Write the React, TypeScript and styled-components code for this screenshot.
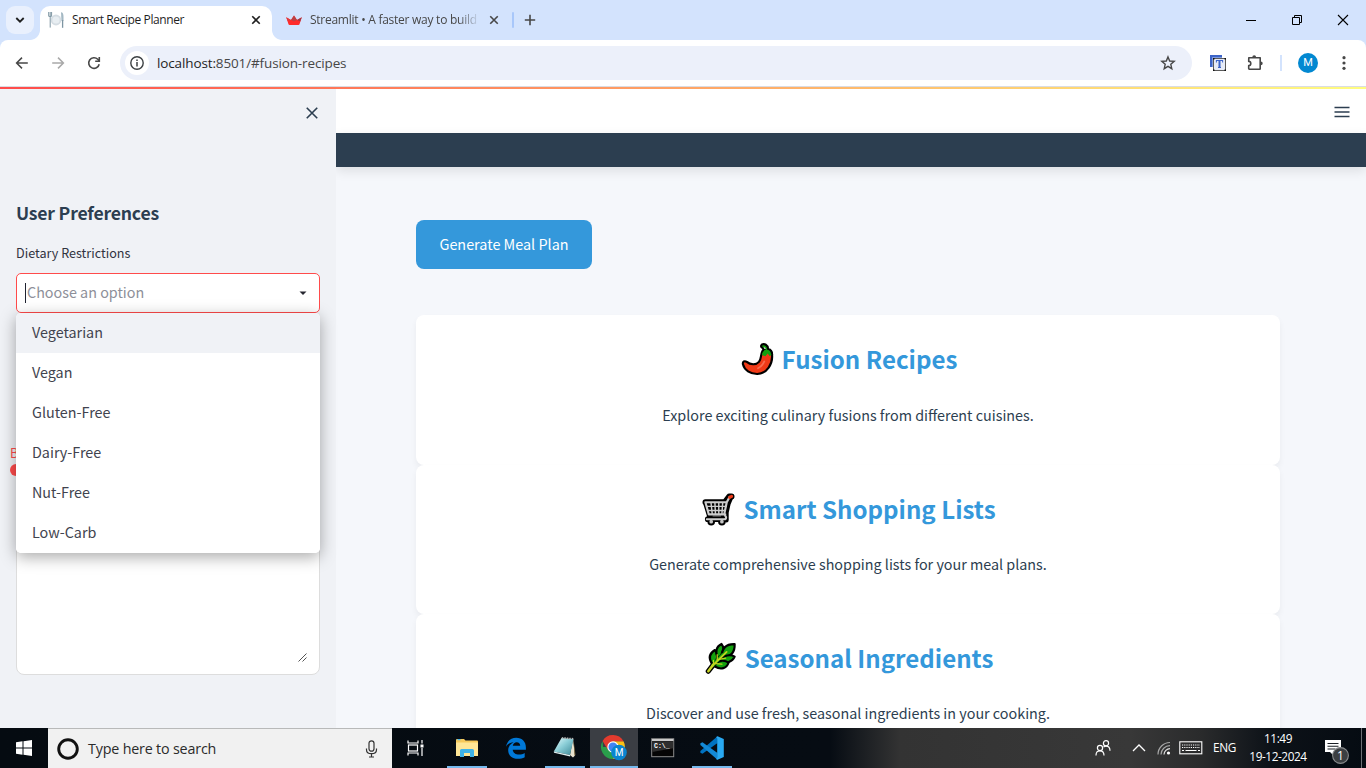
import React from 'react';
import styled, { createGlobalStyle } from 'styled-components';

const SEGOE = `"Open Sans", "Noto Sans", sans-serif`;
const SOURCE = `"Noto Sans CJK SC", "Noto Sans", sans-serif`;

const GlobalStyle = createGlobalStyle`
  * { box-sizing: border-box; }
  body { margin: 0; overflow: hidden; background: #fff; }
  svg { display: block; flex: none; }
`;

const Screen = styled.div`
  width: 1366px;
  height: 768px;
  display: flex;
  flex-direction: column;
  overflow: hidden;
  font-family: ${SEGOE};
`;

/* ---------- browser chrome ---------- */

const TabStrip = styled.div`
  height: 40px;
  flex: none;
  display: flex;
  background: #d3e3fd;
`;

const TabSearch = styled.div`
  width: 28px;
  height: 28px;
  margin: 6px 6px 0;
  border-radius: 9px;
  background: #e9f0fd;
  display: flex;
  align-items: center;
  justify-content: center;
`;

const Tab = styled.div<{ $active?: boolean }>`
  position: relative;
  width: ${p => (p.$active ? 232 : 238)}px;
  height: ${p => (p.$active ? 34 : 28)}px;
  margin-top: 6px;
  padding: 0 10px 0 ${p => (p.$active ? 8 : 14)}px;
  padding-bottom: ${p => (p.$active ? 6 : 0)}px;
  border-radius: 10px 10px 0 0;
  background: ${p => (p.$active ? '#fff' : 'transparent')};
  display: flex;
  align-items: center;
  ${p =>
    p.$active &&
    `&::before, &::after {
      content: '';
      position: absolute;
      bottom: 0;
      width: 10px;
      height: 10px;
    }
    &::before { left: -10px; background: radial-gradient(circle at 0 0, transparent 9.5px, #fff 10.3px); }
    &::after { right: -10px; background: radial-gradient(circle at 100% 0, transparent 9.5px, #fff 10.3px); }`}
`;

const TabTitle = styled.span<{ $fade?: boolean }>`
  flex: 1;
  margin-left: 8px;
  overflow: hidden;
  white-space: nowrap;
  font-size: 12px;
  line-height: 16px;
  letter-spacing: ${p => (p.$fade ? '-0.26px' : '-0.4px')};
  color: ${p => (p.$fade ? '#474747' : '#1f1f1f')};
  ${p => p.$fade && `max-width: 167px; mask-image: linear-gradient(to right, #000 148px, transparent 170px);`}
`;

const TabClose = styled.div`
  margin-left: auto;
`;

const StripDivider = styled.div`
  width: 2px;
  height: 16px;
  margin: 12px 10px 0 2px;
  border-radius: 1px;
  background: #a8c7fa;
`;

const NewTab = styled.div`
  height: 40px;
  display: flex;
  align-items: center;
`;

const WindowControls = styled.div`
  display: flex;
  margin-left: auto;
`;

const WindowButton = styled.div`
  width: 46px;
  height: 40px;
  display: flex;
  align-items: center;
  justify-content: center;
`;

const ToolbarBack = styled.div`
  flex: none;
  background: #d3e3fd;
`;

const Toolbar = styled.div`
  height: 47px;
  padding: 6px 14px 6px 14px;
  border-bottom: 1px solid #dadce3;
  border-radius: 8px 8px 0 0;
  background: #fff;
  display: flex;
  align-items: center;
`;

const NavIcons = styled.div`
  display: flex;
  gap: 20px;
  width: 106px;
`;

const Omnibox = styled.div`
  width: 1072px;
  height: 34px;
  padding: 0 16px 0 5px;
  border-radius: 17px;
  background: #ecf0fa;
  display: flex;
  align-items: center;
`;

const SiteInfo = styled.div`
  width: 24px;
  height: 24px;
  border-radius: 12px;
  background: #fff;
  display: flex;
  align-items: center;
  justify-content: center;
`;

const Address = styled.span`
  flex: 1;
  margin-left: 8px;
  font-size: 13.5px;
  letter-spacing: -0.13px;
  line-height: 20px;
  color: #474747;
  b { font-weight: 400; color: #1f1f1f; }
`;

const Extensions = styled.div`
  display: flex;
  align-items: center;
  margin-left: 18px;
`;

const ExtensionMenu = styled.div`
  margin-left: 20px;
`;

const ExtDivider = styled.div`
  width: 2px;
  height: 16px;
  margin: 0 16px;
  background: #d3e3fd;
`;

const Avatar = styled.div`
  width: 20px;
  height: 20px;
  margin-right: 18px;
  border-radius: 50%;
  background: #0288d1;
  color: #fff;
  font: 400 11px/20px Roboto, sans-serif;
  text-align: center;
`;

/* ---------- page ---------- */

const Decoration = styled.div`
  height: 2px;
  flex: none;
  background: linear-gradient(90deg, #ff4b4b, #fffd80);
`;

const Page = styled.div`
  flex: 1;
  min-height: 0;
  display: flex;
  overflow: hidden;
  font-family: ${SOURCE};
`;

const Sidebar = styled.aside`
  position: relative;
  z-index: 2;
  width: 336px;
  flex: none;
  padding: 16px;
  background: #f0f2f6;
  display: flex;
  flex-direction: column;
`;

const SidebarClose = styled.div`
  display: flex;
  justify-content: flex-end;
  height: 16px;
`;

const SidebarTitle = styled.h2`
  margin: 78px 0 0;
  height: 28px;
  font-size: 17.6px;
  line-height: 28px;
  font-weight: 600;
  letter-spacing: -0.2px;
  color: #2c3e50;
`;

const FieldLabel = styled.label`
  margin-top: 16px;
  font-size: 12.6px;
  line-height: 20px;
  color: #31333f;
`;

const Select = styled.div`
  position: relative;
  height: 40px;
  margin-top: 10px;
  padding: 0 11px 0 8px;
  border: 1px solid #ff4b4b;
  border-radius: 5px;
  background: #fff;
  display: flex;
  align-items: center;
`;

const Caret = styled.span`
  width: 1px;
  height: 20px;
  margin-right: 1px;
  background: #1f2330;
`;

const Placeholder = styled.span`
  flex: 1;
  padding-bottom: 2px;
  font-size: 14.35px;
  line-height: 24px;
  color: #8d8f99;
`;

const Menu = styled.ul`
  position: absolute;
  z-index: 3;
  left: -1px;
  top: 39px;
  width: 304px;
  margin: 0;
  padding: 0;
  list-style: none;
  border-radius: 5px;
  overflow: hidden;
  background: #fff;
  box-shadow: 0 4px 16px rgba(0, 0, 0, 0.34);
`;

const Option = styled.li<{ $hover?: boolean }>`
  height: 40px;
  padding: 0 16px;
  font-size: 14.35px;
  line-height: 38px;
  color: #41434e;
  background: ${p => (p.$hover ? '#f0f2f6' : '#fff')};
`;

const Slider = styled.div`
  margin: 132px -6px 0;
  height: 32px;
  font-size: 12.6px;
  line-height: 16px;
  color: #ff4b4b;
`;

const Thumb = styled.div`
  width: 12px;
  height: 12px;
  margin-top: 3px;
  border-radius: 6px;
  background: #ff4b4b;
`;

const TextArea = styled.div`
  height: 156px;
  margin-top: 42px;
  padding: 11px;
  border: 1px solid #dddddd;
  border-radius: 8px;
  background: #fff;
  display: flex;
  align-items: flex-end;
  justify-content: flex-end;
`;

const Main = styled.main`
  flex: 1;
  display: flex;
  flex-direction: column;
  background: #f5f7fb;
  color: #2c3e50;
`;

const Header = styled.div`
  height: 44px;
  flex: none;
  padding: 2px 16px 0 0;
  background: #fff;
  display: flex;
  align-items: center;
  justify-content: flex-end;
`;

const Banner = styled.div`
  height: 34px;
  flex: none;
  background: #2c3e50;
  box-shadow: 0 4px 12px rgba(0, 0, 0, 0.1);
`;

const Content = styled.div`
  flex: 1;
  min-height: 0;
  padding: 53px 86px 0 80px;
`;

const Primary = styled.button`
  display: block;
  width: 176px;
  height: 49px;
  margin-bottom: 46.4px;
  padding: 0 0 1px;
  border: 0;
  border-radius: 8px;
  background: #3498db;
  color: #fff;
  font: 400 14.4px/24px ${SOURCE};
`;

const Card = styled.section`
  height: 149.2px;
  border-radius: 8px;
  background: #fff;
  box-shadow: 0 4px 6px rgba(0, 0, 0, 0.05);
`;

const CardTitle = styled.h3`
  display: flex;
  justify-content: center;
  align-items: center;
  gap: 8px;
  height: 64px;
  margin: 0;
  padding: 24px 0 0 2px;
  font-size: 24.1px;
  line-height: 36px;
  font-weight: 600;
  color: #3498db;
  svg { margin-top: 1px; }
`;

const CardText = styled.p`
  margin: 23.4px 0 0;
  text-align: center;
  font-size: 14.35px;
  line-height: 24px;
`;

/* ---------- taskbar ---------- */

const Taskbar = styled.footer`
  position: relative;
  z-index: 5;
  height: 40px;
  flex: none;
  display: flex;
  background: linear-gradient(90deg, #050b11 0, #060c13 830px, #333 900px, #383838 1130px, #2a2b2c 1200px, #0d1218 1270px, #050b12 1366px);
  color: #fff;
`;

const StartButton = styled.div`
  width: 48px;
  display: flex;
  align-items: center;
  justify-content: center;
`;

const SearchBox = styled.div`
  width: 344px;
  padding: 0 12px 0 8px;
  border-top: 1px solid #b8b9b9;
  background: #f1f1f1;
  color: #2b2b2b;
  display: flex;
  align-items: center;
  font-size: 14.3px;
  letter-spacing: -0.18px;
  span { flex: 1; margin-left: 8px; line-height: 20px; }
`;

const Apps = styled.div`
  display: flex;
  gap: 1px;
  margin-left: 3px;
`;

const AppButton = styled.div<{ $open?: boolean; $active?: boolean }>`
  width: 48px;
  height: 40px;
  padding-top: 2px;
  background: ${p => (p.$active ? '#3b3e44' : 'transparent')};
  display: flex;
  flex-direction: column;
  align-items: center;
  justify-content: space-between;
  &::after {
    content: '';
    width: ${p => (p.$active ? 48 : 40)}px;
    height: 2px;
    background: ${p => (p.$open || p.$active ? '#76b9ed' : 'transparent')};
  }
`;

const AppIcon = styled.div`
  height: 36px;
  display: flex;
  align-items: center;
`;

const Tray = styled.div`
  display: flex;
  align-items: center;
  margin-left: auto;
`;

const TrayItem = styled.div<{ $w: number }>`
  width: ${p => p.$w}px;
  display: flex;
  justify-content: center;
`;

const Notifications = styled.div`
  width: 53px;
  height: 40px;
  padding: 11px 0 0 16px;
`;

const Language = styled.div`
  width: 24px;
  margin: 0 11px 0 9px;
  padding-bottom: 2px;
  font-size: 11.8px;
  letter-spacing: -0.3px;
`;

const Clock = styled.div`
  width: 60px;
  padding-bottom: 2px;
  text-align: center;
  font-size: 11.8px;
  line-height: 18px;
  letter-spacing: -0.42px;
  white-space: nowrap;
`;

const ShowDesktop = styled.div`
  width: 5px;
  height: 40px;
  border-left: 1px solid #6c7075;
`;

/* ---------- drawings ---------- */

const Cross = ({ size, box, color, width }: { size: number; box: number; color: string; width: number }) => {
  const a = (box - size) / 2;
  const b = box - a;
  return (
    <svg width={box} height={box} stroke={color} strokeWidth={width}>
      <path d={`M${a} ${a}L${b} ${b}M${b} ${a}L${a} ${b}`} />
    </svg>
  );
};

const PlateIcon = () => (
  <svg width="16" height="16" viewBox="0 0 16 16">
    <circle cx="8" cy="8" r="5.4" fill="#d5dde3" />
    <circle cx="8" cy="8" r="3.6" fill="#e8eef2" />
    <path d="M.7 0v4.2M2.2 0v4.2M3.6 0v4.2M.6 4.4h3M2.2 4v11.6" stroke="#7d95a2" strokeWidth="1" fill="none" />
    <path d="M13 .2c1.8 0 2.5 1.8 2.5 4.8v4h-2z" fill="#a3b8c3" />
    <path d="M14.6 8v7.8" stroke="#7d95a2" strokeWidth="1.3" />
  </svg>
);

const CrownIcon = () => (
  <svg width="16" height="16" viewBox="0 0 16 16">
    <path d="M.2 5.2 5 8 8 3.6 11 8l4.8-2.8-2.3 7.1q-.3.6-1 .6h-9q-.7 0-1-.6z" fill="#ff2b2b" />
    <path d="M8 3.6 11 8 8 9.6 5 8z" fill="#bd4043" />
    <path d="M11 8l4.8-2.8-1.6 4.2z" fill="#a13a46" />
    <path d="M5 8 .2 5.2l1.5 3.7z" fill="#df3b3e" />
  </svg>
);

const BackIcon = ({ flip }: { flip?: boolean }) => (
  <svg width="16" height="16" viewBox="0 0 16 16" fill="none" stroke={flip ? '#a9a9a9' : '#474747'} strokeWidth="1.5">
    <path d={flip ? 'M2.2 8h11M8 2.6 13.4 8 8 13.4' : 'M13.8 8h-11M8 2.6 2.6 8 8 13.4'} />
  </svg>
);

const ReloadIcon = () => (
  <svg width="16" height="16" viewBox="0 0 16 16" fill="none" stroke="#474747" strokeWidth="1.6">
    <path d="M13.2 9.200A5.3 5.3 0 1 1 11.800 4.300L13.300 5.900" />
    <path d="M13.300 2v4.200H9.200" />
  </svg>
);

const InfoIcon = () => (
  <svg width="16" height="16" viewBox="0 0 16 16">
    <circle cx="8" cy="8" r="6.2" fill="none" stroke="#3c4043" strokeWidth="1.4" />
    <path d="M8 7v4.4M8 4.6v1.5" stroke="#3c4043" strokeWidth="1.5" />
  </svg>
);

const StarIcon = () => (
  <svg width="16" height="16" viewBox="0 0 16 16" fill="none" stroke="#474747" strokeWidth="1.4">
    <path d="M8 1.9l1.7 4.1 4.5.4-3.4 2.9 1 4.4L8 11.4l-3.8 2.3 1-4.4L1.8 6.4l4.5-.4z" />
  </svg>
);

const TranslateIcon = () => (
  <svg width="16" height="16" viewBox="0 0 16 16">
    <path d="M0 0h12v2H2v10H0z" fill="#3c64c8" />
    <path d="M2 2h10v1H3v9H2z" fill="#7f9ce0" />
    <rect x="3.5" y="3.5" width="12" height="12" fill="#e6ebf7" stroke="#5a5a5a" />
    <path d="M3 3h1.500v1.500H3zM14.500 3H16v1.500h-1.500zM3 14.500h1.500V16H3zM14.500 14.500H16V16h-1.500z" fill="#111" />
    <path d="M6 5.500h7M6.400 5v2.500M12.600 5v2.500M8 12.500h3" stroke="#3c64c8" strokeWidth="1" fill="none" />
    <path d="M9.500 5v8" stroke="#3c64c8" strokeWidth="2" />
  </svg>
);

const PuzzleIcon = () => (
  <svg width="18" height="18" viewBox="0 0 18 18">
    <path
      d="M2.8 3.8h11.4v10.9q0 .5-.5.5H3.3q-.6 0-.6-.6v-3a2.1 2.1 0 0 0 0-4.2z"
      fill="none"
      stroke="#474747"
      strokeWidth="1.6"
      strokeLinejoin="round"
    />
    <path d="M6.300 3.200a1.900 1.900 0 0 1 3.800 0zM14.8 7.400a1.900 1.900 0 0 1 0 3.800z" fill="#474747" />
  </svg>
);

const DotsIcon = () => (
  <svg width="16" height="16" viewBox="0 0 16 16" fill="#474747">
    <circle cx="8" cy="2.7" r="1.6" />
    <circle cx="8" cy="8" r="1.6" />
    <circle cx="8" cy="13.3" r="1.6" />
  </svg>
);

const ChiliIcon = () => (
  <svg width="33" height="33" viewBox="0 0 34 34">
    <path
      d="M22 8.5c3.5-3.4 9.6-1.8 10 3.6.8 9-5 19.5-15.2 19.8C9.500 32 3.500 28 2 22c-.6-3 1.700-4 4-2.500 3.500 3 9.500 3.500 12.500 0 2.600-3 1.500-7 3.500-11z"
      fill="#f03a17"
      stroke="#000"
      strokeWidth="2.200"
    />
    <path d="M21.600 12.400c.2-3.400 2.600-5.600 4.300-5.900-.4-1.500-1.200-2.100-2.800-1.700-1.600.2-2.900-1.800-1.600-3.200 2.600-1.300 6.200.3 6.400 4.400 2.200.6 4.200 3 4.100 6.200l-2.500 1.100-2-2.400-2.400 2.700z" fill="#13a10e" />
    <path d="M22 8.200c2-1.700 1-2.500-.9-3.900-.6-.8-.6-2 .4-2.700 2.600-1.300 6.200.3 6.400 4.400 2.200.6 4.200 3 4.200 6.200" fill="none" stroke="#000" strokeWidth="2.200" />
    <path d="M24 19q-2 5-6.500 7" fill="none" stroke="#f86b50" strokeWidth="1.8" strokeLinecap="round" />
  </svg>
);

const CartIcon = () => (
  <svg width="33" height="33" viewBox="0 0 34 34" fill="none" strokeLinejoin="round" strokeLinecap="round">
    <path d="M3.500 9.500h20l4.500-6h2.500M4 10l4 13M24.500 10l-2 14M6 27h18" stroke="#000" strokeWidth="6" />
    <path d="M30 4l-3 7-2 9v8" stroke="#000" strokeWidth="5" />
    <path d="M3.500 9.500h22l-3 13H7.500z" fill="#000" stroke="#000" strokeWidth="2" />
    <circle cx="9.500" cy="29.500" r="2.900" fill="#c4c4c4" stroke="#000" strokeWidth="2" />
    <circle cx="20.500" cy="29.500" r="2.900" fill="#c4c4c4" stroke="#000" strokeWidth="2" />
    <path d="M3.500 9.500h22l3-5.500M3.500 9.500l3.500 12.500h17M25.500 9.500l-2.500 12 1.800 3.500q.2 2-1.800 2H5" stroke="#cdcdcd" strokeWidth="2.200" />
    <path d="M9.300 10l1.300 12M13.300 10l.6 12M17.300 10v12M21.300 10l-.8 12M4.800 13.800h20M6 18h18" stroke="#cdcdcd" strokeWidth="1.500" />
    <path d="M28.500 4.500l2-1" stroke="#f03a17" strokeWidth="3.200" />
  </svg>
);

const HerbIcon = () => (
  <svg width="32" height="33" viewBox="0 0 34 34" strokeLinejoin="round" strokeLinecap="round">
    <g fill="#13a10e" stroke="#000" strokeWidth="2.300">
      <path d="M7 22c-3-5-3-10 3.500-14 4 5 3 9 0 14z" />
      <path d="M13.500 16c-3-6-1.500-12 4-14.500 3.600 4 2.600 9-2 14z" />
      <path d="M17.500 15C18 6 23 1.500 31.500 1.800c.3 8-3 13-12 14z" />
      <path d="M15 19c5-6 12-6.500 16.500-4-2.500 6-9 7.500-15 5.500z" />
      <path d="M11.500 22.500c4-4 9.500-4 13.500-1-2 6-8 8-14.500 4z" />
    </g>
    <path d="M3.500 30.500 8.500 24" fill="none" stroke="#000" strokeWidth="5.500" />
    <path d="M8.500 24 19 13" fill="none" stroke="#13a10e" strokeWidth="3.500" />
    <path d="M9 23.500V19M13 19v-6M15 18l7-1.500M11 22.500l7 .5" fill="none" stroke="#c4d41f" strokeWidth="1.300" />
    <path d="M3.500 30.500 8.500 24" fill="none" stroke="#c9d827" strokeWidth="2.600" />
    <path d="M8.500 24 23 10" fill="none" stroke="#c4d41f" strokeWidth="1.900" />
  </svg>
);

const WindowsIcon = () => (
  <svg width="16" height="16" viewBox="0 0 16 16" fill="#fff">
    <path d="M0 2.200l6.500-.9v6.200H0zM7.500 1.200 16 0v7.500H7.500zM0 8.500h6.500v6.200L0 13.800zM7.500 8.500H16V16l-8.500-1.200z" />
  </svg>
);

const RingIcon = () => (
  <svg width="24" height="24">
    <circle cx="12" cy="12" r="9.300" fill="none" stroke="#111" strokeWidth="2.900" />
  </svg>
);

const MicIcon = () => (
  <svg width="16" height="18" viewBox="0 0 16 18" fill="none" stroke="#333" strokeWidth="1.200">
    <rect x="5" y=".8" width="5" height="10.400" rx="2.500" />
    <path d="M2.500 8.500v1.200q0 4 5 4t5-4V8.500M7.500 13.700v3.700M5 17h5" />
  </svg>
);

const TaskViewIcon = () => (
  <svg width="18" height="16" viewBox="0 0 18 16" fill="none" stroke="#fff" strokeWidth="1.200">
    <path d="M1 .5v2.500h10V.5M1 15.500V13h10v2.500M15 0v3.500M15 8v8" />
    <rect x="1.500" y="5" width="9" height="6" />
    <path d="M13.500 4.500h3v3h-3z" fill="#fff" stroke="none" />
  </svg>
);

const FolderIcon = () => (
  <svg width="24" height="20" viewBox="0 0 24 20">
    <path d="M1 2q0-1 1-1h7l1.500 1.500H22q1 0 1 1V18H1z" fill="#f7c95a" />
    <path d="M1 4.500h22V18H1z" fill="#ffe696" />
    <path d="M2.500 1h3v1.200h-3z" fill="#4db6e8" />
    <path d="M5 19v-6.500q0-1.500 1.500-1.500h11q1.500 0 1.500 1.500V19h-4v-4H9v4z" fill="#3fb3e8" />
  </svg>
);

const EdgeIcon = () => (
  <svg width="22" height="22" viewBox="0 0 22 22">
    <path
      d="M1 9.800C2 3.800 6 .8 11.200.8c6 0 9.700 4 9.700 9.700v2.200H7.700c.3 3.200 3 4.800 6.200 4.800 2.200 0 4.200-.6 5.800-1.600v4.300c-2 1.100-4.300 1.600-6.700 1.600-6 0-9.800-3.500-9.800-8.600 0-3.500 2-6.500 5.300-8C4.900 5.600 2.500 7.200 1 9.800zm6.800-1h7.400c-.1-2.300-1.300-3.600-3.500-3.600-2 0-3.500 1.400-3.900 3.600z"
      fill="#0078d7"
    />
  </svg>
);

const NotepadIcon = () => (
  <svg width="24" height="24" viewBox="0 0 24 24">
    <defs>
      <linearGradient id="note" x1="0" y1="0" x2="1" y2="1">
        <stop offset="0" stopColor="#e9fbfd" />
        <stop offset=".45" stopColor="#8ccfd8" />
        <stop offset="1" stopColor="#3b8796" />
      </linearGradient>
    </defs>
    <path d="M20 3l2 16.500-2 2L17 19z" fill="#e9e2cf" />
    <path d="M20.500 3.500 22.500 19l-1 .8z" fill="#7c6a41" />
    <path d="M8.500 2l12 1-3.500 16L.8 15.500z" fill="url(#note)" />
    <path d="M.8 15.500l16.200 3.500.2 1.500L1 16.700z" fill="#dff0f2" />
    <path d="M8.800 1.800 20.500 2.800" stroke="#b5b5b5" strokeWidth="1.600" strokeDasharray="1.500 1" />
  </svg>
);

const ChromeIcon = () => (
  <svg width="28" height="28" viewBox="0 0 28 28">
    <path d="M13 13H3L2.600 7A12 12 0 0 0 13 25l5.200-9z" fill="#2a9e4b" />
    <path d="M13 7.300h10.500A12 12 0 0 1 13 25l5.200-9z" fill="#fbc116" />
    <path d="M2.600 7A12 12 0 0 1 23.500 7.300H13L8 16z" fill="#e33b2e" />
    <circle cx="13" cy="13" r="5.700" fill="#fff" />
    <circle cx="13" cy="13" r="4.500" fill="#4285f4" />
    <circle cx="19" cy="18.500" r="7.800" fill="#0a84d0" />
    <text x="19" y="22.100" fill="#fff" fontFamily="Roboto" fontWeight="400" fontSize="10" textAnchor="middle">
      M
    </text>
  </svg>
);

const TerminalIcon = () => (
  <svg width="24" height="20" viewBox="0 0 24 20">
    <rect x=".7" y=".7" width="22" height="18" fill="#050505" stroke="#8c8c8c" />
    <path d="M1 1h21.500v2H1z" fill="#c9c9c9" />
    <path d="M1.200 3.200h21v7L1.200 14z" fill="#2e2e2e" />
    <text x="3" y="9.500" fill="#fff" fontFamily="Liberation Mono" fontWeight="700" fontSize="6.500">
      C:\_
    </text>
  </svg>
);

const CodeIcon = () => (
  <svg width="24" height="24" viewBox="0 0 24 24">
    <path d="M.4 15.100 17.500.2V7.100L2.500 17.800.4 16.700z" fill="#0072c0" />
    <path d="M.4 8.900 17.500 23.800V16.900L2.500 6.200.4 7.300z" fill="#1389d6" />
    <path d="M17.500.2 23.800 3v18l-6.300 2.800q-1 0-1.300-.8l1-1.500V2.500l-1-1.500z" fill="#29a9f2" />
  </svg>
);

const PeopleIcon = () => (
  <svg width="16" height="16" viewBox="0 0 16 16" fill="none" stroke="#fff" strokeWidth="1.200">
    <circle cx="5" cy="8" r="2.600" />
    <path d="M1 15.500q0-4.700 4-4.700t4 4.700" />
    <circle cx="11" cy="3.300" r="2.600" />
    <path d="M8.500 7.200q1-1.100 2.500-1.100 4 0 4 4.700" />
  </svg>
);

const WifiIcon = () => (
  <svg width="14" height="14" viewBox="0 0 14 14" fill="none" strokeWidth="1.200">
    <path d="M1 13.500A12 12 0 0 1 13 1.500M4 13.500A9 9 0 0 1 13 4.700" stroke="#a8a8a8" />
    <path d="M7 13.500A6 6 0 0 1 13 7.700" stroke="#ddd" />
    <circle cx="11.500" cy="12" r="1.600" fill="#fff" />
  </svg>
);

const KeyboardIcon = () => (
  <svg width="24" height="14" viewBox="0 0 24 14" fill="none" stroke="#fff">
    <rect x=".8" y=".8" width="22" height="12" strokeWidth="1.100" />
    <path d="M3 4h18M3 6.500h18" strokeDasharray="1.200 1" strokeWidth="1.200" />
    <path d="M3 9.500h2M6.500 9.500h11M19 9.500h2" strokeWidth="1.200" />
  </svg>
);

const NoticeIcon = () => (
  <svg width="26" height="26" viewBox="0 0 26 26">
    <path d="M1 1h16v12h-7v4l-4-4H1z" fill="#fff" />
    <path d="M3.500 4.500h11M3.500 7.200h11M3.500 10h8" stroke="#1b2026" strokeWidth="1.100" />
    <circle cx="16.500" cy="16.500" r="7.900" fill="#3c3f42" stroke="#898b8d" strokeWidth="1.100" />
    <text x="16.500" y="20.500" fill="#fff" fontFamily="Open Sans" fontSize="12" textAnchor="middle">
      1
    </text>
  </svg>
);

/* ---------- composition ---------- */

const diets = ['Vegetarian', 'Vegan', 'Gluten-Free', 'Dairy-Free', 'Nut-Free', 'Low-Carb'];

const features = [
  { icon: <ChiliIcon />, title: 'Fusion Recipes', text: 'Explore exciting culinary fusions from different cuisines.' },
  { icon: <CartIcon />, title: 'Smart Shopping Lists', text: 'Generate comprehensive shopping lists for your meal plans.' },
  { icon: <HerbIcon />, title: 'Seasonal Ingredients', text: 'Discover and use fresh, seasonal ingredients in your cooking.' },
];

const apps = [
  { name: 'explorer', icon: <FolderIcon />, open: true },
  { name: 'edge', icon: <EdgeIcon /> },
  { name: 'notepad', icon: <NotepadIcon />, open: true },
  { name: 'chrome', icon: <ChromeIcon />, active: true },
  { name: 'terminal', icon: <TerminalIcon /> },
  { name: 'code', icon: <CodeIcon />, open: true },
];

export default function App() {
  return (
    <Screen>
      <GlobalStyle />
      <TabStrip>
        <TabSearch>
          <svg width="10" height="8" viewBox="0 0 10 8" fill="none" stroke="#1f1f1f" strokeWidth="1.800">
            <path d="M1.300 2 5 5.700 8.700 2" />
          </svg>
        </TabSearch>
        <Tab $active>
          <PlateIcon />
          <TabTitle>Smart Recipe Planner</TabTitle>
          <TabClose>
            <Cross size={7.5} box={12} color="#1f1f1f" width={1.6} />
          </TabClose>
        </Tab>
        <Tab>
          <CrownIcon />
          <TabTitle $fade>Streamlit • A faster way to build</TabTitle>
          <TabClose>
            <Cross size={7.5} box={12} color="#474747" width={1.6} />
          </TabClose>
        </Tab>
        <StripDivider />
        <NewTab>
          <svg width="12" height="12" stroke="#474747" strokeWidth="1.600">
            <path d="M6 .8v10.400M.8 6h10.400" />
          </svg>
        </NewTab>
        <WindowControls>
          <WindowButton>
            <svg width="10" height="10">
              <path d="M0 5.500h10" stroke="#000" />
            </svg>
          </WindowButton>
          <WindowButton>
            <svg width="10" height="10" fill="none" stroke="#000">
              <path d="M.5 2.500h7v7h-7zM2.500 2.500v-2h7v7h-2" />
            </svg>
          </WindowButton>
          <WindowButton>
            <Cross size={10} box={12} color="#000" width={1.1} />
          </WindowButton>
        </WindowControls>
      </TabStrip>
      <ToolbarBack>
        <Toolbar>
          <NavIcons>
            <BackIcon />
            <BackIcon flip />
            <ReloadIcon />
          </NavIcons>
          <Omnibox>
            <SiteInfo>
              <InfoIcon />
            </SiteInfo>
            <Address>
              <b>localhost:</b>8501/#fusion-recipes
            </Address>
            <StarIcon />
          </Omnibox>
          <Extensions>
            <TranslateIcon />
            <ExtensionMenu>
              <PuzzleIcon />
            </ExtensionMenu>
            <ExtDivider />
            <Avatar>M</Avatar>
            <DotsIcon />
          </Extensions>
        </Toolbar>
      </ToolbarBack>
      <Decoration />
      <Page>
        <Sidebar>
          <SidebarClose>
            <Cross size={10.5} box={16} color="#2c3e50" width={1.6} />
          </SidebarClose>
          <SidebarTitle>User Preferences</SidebarTitle>
          <FieldLabel>Dietary Restrictions</FieldLabel>
          <Select>
            <Caret />
            <Placeholder>Choose an option</Placeholder>
            <svg width="10" height="6">
              <path d="M1.500 1.500h7L5 5z" fill="#262730" />
            </svg>
            <Menu>
              {diets.map((d, i) => (
                <Option key={d} $hover={i === 0}>
                  {d}
                </Option>
              ))}
            </Menu>
          </Select>
          <Slider>
            B
            <Thumb />
          </Slider>
          <TextArea>
            <svg width="10" height="10" stroke="#555" strokeWidth="1">
              <path d="M.5 8.500l8-8M4.500 8.500l4-4" />
            </svg>
          </TextArea>
        </Sidebar>
        <Main>
          <Header>
            <svg width="16" height="12" stroke="#2c3e50" strokeWidth="1.600">
              <path d="M.5 1.500h15M.5 6h15M.5 10.500h15" />
            </svg>
          </Header>
          <Banner />
          <Content>
            <Primary>Generate Meal Plan</Primary>
            {features.map(f => (
              <Card key={f.title}>
                <CardTitle>
                  {f.icon}
                  {f.title}
                </CardTitle>
                <CardText>{f.text}</CardText>
              </Card>
            ))}
          </Content>
        </Main>
      </Page>
      <Taskbar>
        <StartButton>
          <WindowsIcon />
        </StartButton>
        <SearchBox>
          <RingIcon />
          <span>Type here to search</span>
          <MicIcon />
        </SearchBox>
        <StartButton>
          <TaskViewIcon />
        </StartButton>
        <Apps>
          {apps.map(a => (
            <AppButton key={a.name} $open={a.open} $active={a.active}>
              <AppIcon>{a.icon}</AppIcon>
            </AppButton>
          ))}
        </Apps>
        <Tray>
          <TrayItem $w={50}>
            <PeopleIcon />
          </TrayItem>
          <TrayItem $w={22}>
            <svg width="14" height="8" fill="none" stroke="#fff" strokeWidth="1.300">
              <path d="M1 7l6-6 6 6" />
            </svg>
          </TrayItem>
          <TrayItem $w={28}>
            <WifiIcon />
          </TrayItem>
          <TrayItem $w={26}>
            <KeyboardIcon />
          </TrayItem>
          <Language>ENG</Language>
          <Clock>
            11:49
            <br />
            19-12-2024
          </Clock>
          <Notifications>
            <NoticeIcon />
          </Notifications>
          <ShowDesktop />
        </Tray>
      </Taskbar>
    </Screen>
  );
}
